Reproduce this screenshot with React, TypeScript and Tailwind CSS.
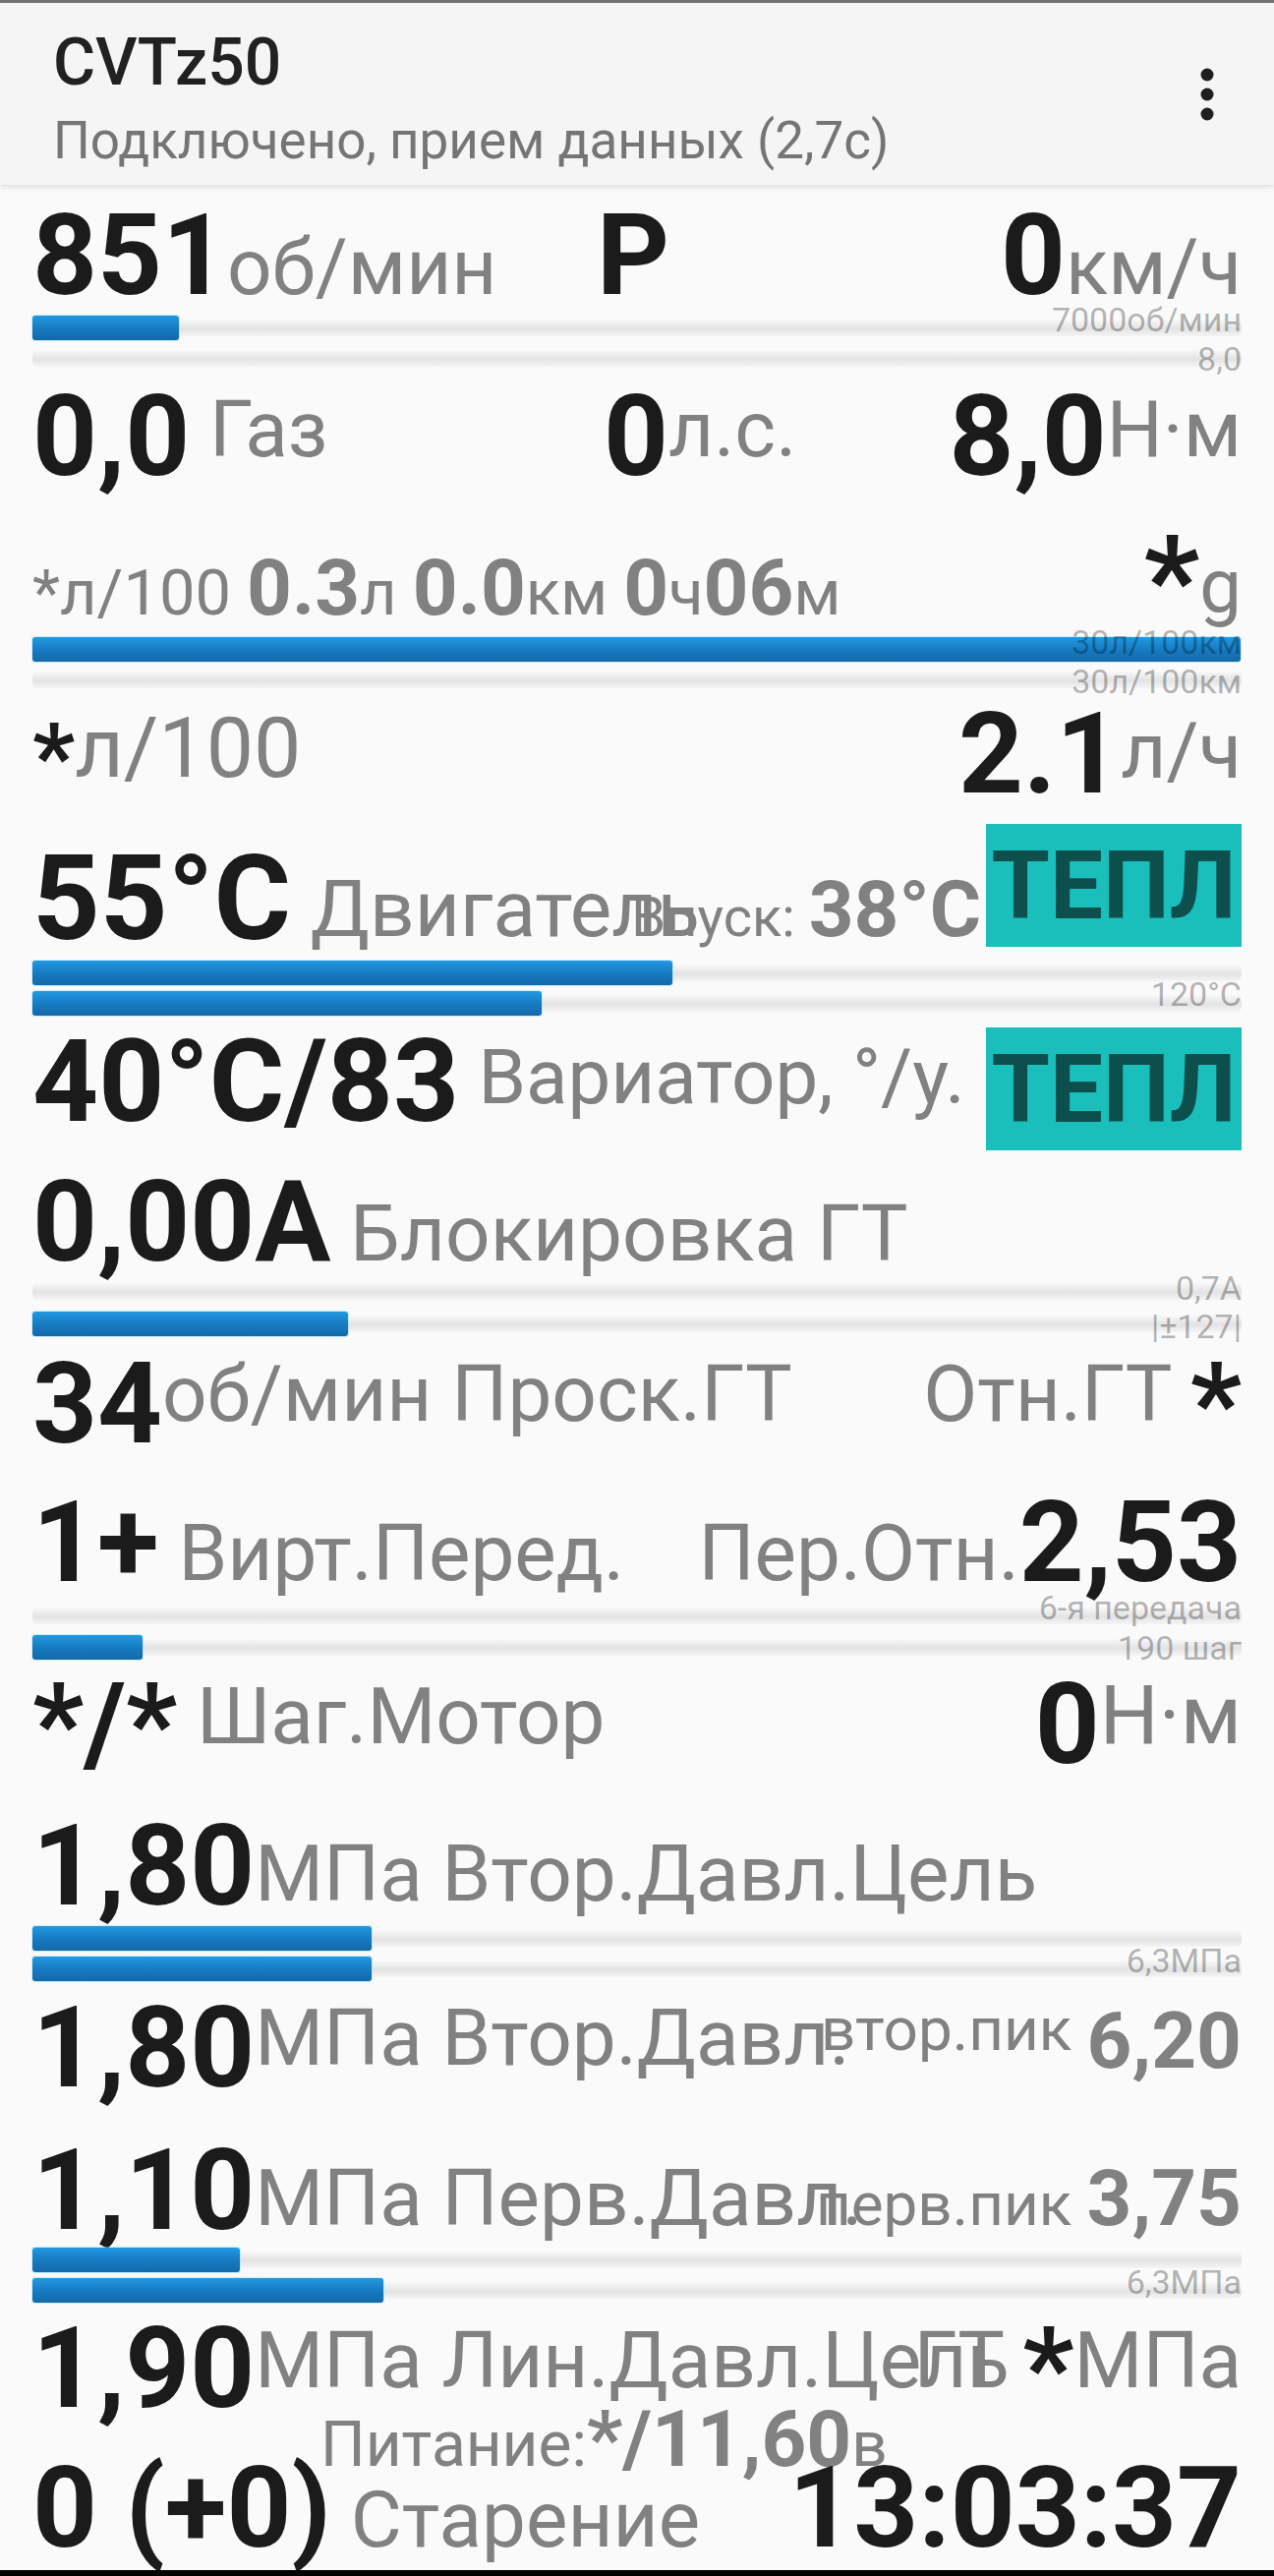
import React from 'react';

const CELL = 'col-start-1 row-start-1 whitespace-nowrap leading-none';
const BIG = 'text-[115px] font-bold text-[#1b1b1b]';
const GRAY = 'text-[#818181] font-normal';
const LABEL = 'absolute right-0 whitespace-nowrap text-[34px] leading-none text-black/30';

function Dots() {
  return (
    <svg width="14" height="54" viewBox="0 0 14 54" className="shrink-0">
      <circle cx="7" cy="7" r="6.5" fill="#1f1f1f" />
      <circle cx="7" cy="27" r="6.5" fill="#1f1f1f" />
      <circle cx="7" cy="47" r="6.5" fill="#1f1f1f" />
    </svg>
  );
}

// track + blue fill, fill is in px of the 1229px track
function Bar({ fill = 0 }: { fill?: number }) {
  return (
    <div className="relative h-[25px] shrink-0">
      <div className="absolute inset-x-0 top-[4px] h-[17px] rounded-[5px] bg-[linear-gradient(to_bottom,#f8f8f8,#e3e3e3_55%,#f5f5f5)]" />
      {fill > 0 && (
        <div
          className="absolute inset-y-0 left-0 rounded-[3px] bg-[linear-gradient(to_bottom,#2299e2,#1679c0_55%,#1469a9)] shadow-[0_0_0_1px_rgba(140,225,255,0.45)]"
          style={{ width: fill }}
        />
      )}
    </div>
  );
}

function Tepl({ className = '' }: { className?: string }) {
  return (
    <div
      className={`flex h-[125px] w-[260px] shrink-0 items-center justify-center bg-[#1abebb] text-[96px] font-bold leading-none text-[#0c4f4d] ${className}`}
    >
      ТЕПЛ
    </div>
  );
}

export default function App() {
  return (
    <div className="relative flex h-[2620px] w-[1296px] flex-col overflow-hidden bg-[#fafafa] font-['Roboto',sans-serif]">
      {/* Toolbar */}
      <header className="relative z-10 flex h-[188px] shrink-0 items-center justify-between border-t-[3px] border-[#737373] bg-[#f5f5f5] pl-[54px] pr-[61px] shadow-[0_2px_6px_rgba(0,0,0,0.13)]">
        <div className="flex flex-col self-start pt-[28px]">
          <div className="text-[66px] font-medium leading-none text-[#212121]">CVTz50</div>
          <div className="mt-[20px] text-[53px] leading-none text-[#757575]">
            Подключено, прием данных (2,7с)
          </div>
        </div>
        <Dots />
      </header>

      <div className="flex flex-col px-[33px]">
        {/* RPM / selector / speed */}
        <div className="grid h-[128px] shrink-0">
          <div className={`${CELL} mt-[14px] justify-self-start ${BIG}`}>
            851<span className={`text-[80px] ${GRAY}`}>об/мин</span>
          </div>
          <div className={`${CELL} ml-[574px] mt-[14px] justify-self-start ${BIG}`}>P</div>
          <div className={`${CELL} mt-[14px] justify-self-end ${BIG}`}>
            0<span className={`text-[80px] ${GRAY}`}>км/ч</span>
          </div>
        </div>
        <div className="relative flex h-[66px] shrink-0 flex-col gap-[6px] pt-[5px]">
          <Bar fill={149} />
          <Bar />
          <span className={`${LABEL} top-[-8px]`}>7000об/мин</span>
          <span className={`${LABEL} top-[32px]`}>8,0</span>
        </div>

        {/* Throttle / power / torque */}
        <div className="grid h-[146px] shrink-0">
          <div className={`${CELL} mt-[4px] justify-self-start ${BIG}`}>
            0,0<span className={`align-[19px] text-[80px] ${GRAY}`}> Газ</span>
          </div>
          <div className={`${CELL} ml-[581px] mt-[4px] justify-self-start ${BIG}`}>
            0<span className={`align-[19px] text-[80px] ${GRAY}`}>л.с.</span>
          </div>
          <div className={`${CELL} mt-[4px] justify-self-end ${BIG}`}>
            8,0<span className={`align-[19px] text-[80px] ${GRAY}`}>Н·м</span>
          </div>
        </div>

        {/* Trip */}
        <div className="grid h-[115px] shrink-0">
          <div className={`${CELL} mt-[30px] justify-self-start text-[80px] font-bold text-[#818181]`}>
            <span className="text-[65px] font-normal">*л/100 </span>0.3
            <span className="text-[65px] font-normal">л </span>0.0
            <span className="text-[65px] font-normal">км </span>0
            <span className="text-[65px] font-normal">ч</span>06
            <span className="text-[65px] font-normal">м</span>
          </div>
          <div className={`${CELL} mt-[0px] justify-self-end ${BIG}`}>
            <span className="align-[-8px] text-[125px]">*</span>
            <span className={`align-[3px] text-[76px] ${GRAY}`}>g</span>
          </div>
        </div>
        <div className="relative flex h-[66px] shrink-0 flex-col gap-[6px] pt-[5px]">
          <Bar fill={1229} />
          <Bar />
          <span className={`${LABEL} top-[-7px]`}>30л/100км</span>
          <span className={`${LABEL} top-[33px]`}>30л/100км</span>
        </div>

        {/* Consumption */}
        <div className="grid h-[121px] shrink-0">
          <div className={`${CELL} mt-[9px] justify-self-start text-[86px] ${GRAY}`}>
            <span className="align-[-12px] text-[95px] font-bold text-[#1b1b1b]">*</span>л/100
          </div>
          <div className={`${CELL} mt-[0px] justify-self-end ${BIG}`}>
            2.1<span className={`align-[15px] text-[80px] ${GRAY}`}>л/ч</span>
          </div>
        </div>

        {/* Engine temp */}
        <div className="grid h-[142px] shrink-0">
          <div className={`${CELL} mt-[24px] justify-self-start text-[120px] font-bold text-[#1b1b1b]`}>
            55°C<span className={`align-[3px] text-[80px] ${GRAY}`}> Двигатель</span>
          </div>
          <div className={`${CELL} flex items-start justify-self-end`}>
            <div className="mt-[55px] text-[80px] font-bold leading-none text-[#818181]">
              <span className="text-[56px] font-normal">Впуск: </span>38°C
            </div>
            <Tepl className="ml-[5px] mt-[8px]" />
          </div>
        </div>
        <div className="relative flex h-[66px] shrink-0 flex-col gap-[6px] pt-[5px]">
          <Bar fill={651} />
          <Bar fill={518} />
          <span className={`${LABEL} top-[22px]`}>120°C</span>
        </div>

        {/* CVT temp */}
        <div className="grid h-[142px] shrink-0">
          <div className={`${CELL} mt-[4px] justify-self-start text-[117px] font-bold text-[#1b1b1b]`}>
            40°C/83<span className={`align-[18px] text-[78px] ${GRAY}`}> Вариатор, °/у.</span>
          </div>
          <Tepl className={`${CELL} mt-[7px] justify-self-end`} />
        </div>

        {/* Lockup */}
        <div className="grid h-[116px] shrink-0">
          <div className={`${CELL} mt-[5px] justify-self-start ${BIG}`}>
            0,00A<span className={`text-[80px] ${GRAY}`}> Блокировка ГТ</span>
          </div>
        </div>
        <div className="relative flex h-[68px] shrink-0 flex-col gap-[8px] pt-[5px]">
          <Bar />
          <Bar fill={321} />
          <span className={`${LABEL} top-[-3px]`}>0,7А</span>
          <span className={`${LABEL} top-[36px]`}>|±127|</span>
        </div>

        {/* Slip */}
        <div className="grid h-[145px] shrink-0">
          <div className={`${CELL} mt-[6px] justify-self-start ${BIG}`}>
            34<span className={`align-[22px] text-[80px] ${GRAY}`}>об/мин Проск.ГТ</span>
          </div>
          <div className={`${CELL} mt-[6px] justify-self-end ${BIG}`}>
            <span className={`align-[22px] text-[80px] ${GRAY}`}>Отн.ГТ </span>*
          </div>
        </div>

        {/* Virtual gear */}
        <div className="grid h-[117px] shrink-0">
          <div className={`${CELL} mt-[2px] justify-self-start ${BIG}`}>
            1+<span className={`align-[1px] text-[80px] ${GRAY}`}> Вирт.Перед.</span>
          </div>
          <div className={`${CELL} mt-[2px] justify-self-end ${BIG}`}>
            <span className={`align-[1px] text-[80px] ${GRAY}`}>Пер.Отн.</span>2,53
          </div>
        </div>
        <div className="relative flex h-[66px] shrink-0 flex-col gap-[7px] pt-[5px]">
          <Bar />
          <Bar fill={112} />
          <span className={`${LABEL} top-[-8px]`}>6-я передача</span>
          <span className={`${LABEL} top-[33px]`}>190 шаг</span>
        </div>

        {/* Stepper */}
        <div className="grid h-[143px] shrink-0">
          <div className={`${CELL} mt-[4px] justify-self-start ${BIG}`}>
            */*<span className={`align-[20px] text-[80px] ${GRAY}`}> Шаг.Мотор</span>
          </div>
          <div className={`${CELL} mt-[4px] justify-self-end ${BIG}`}>
            0<span className={`align-[20px] text-[84px] ${GRAY}`}>Н·м</span>
          </div>
        </div>

        {/* Secondary target */}
        <div className="grid h-[119px] shrink-0">
          <div className={`${CELL} mt-[5px] justify-self-start ${BIG}`}>
            1,80<span className={`align-[4px] text-[80px] ${GRAY}`}>МПа Втор.Давл.Цель</span>
          </div>
        </div>
        <div className="relative flex h-[66px] shrink-0 flex-col gap-[6px] pt-[5px]">
          <Bar fill={345} />
          <Bar fill={345} />
          <span className={`${LABEL} top-[23px]`}>6,3МПа</span>
        </div>

        {/* Secondary pressure */}
        <div className="grid h-[150px] shrink-0">
          <div className={`${CELL} mt-[5px] justify-self-start ${BIG}`}>
            1,80<span className={`align-[22px] text-[80px] ${GRAY}`}>МПа Втор.Давл.</span>
          </div>
          <div className={`${CELL} mt-[13px] justify-self-end text-[80px] font-bold text-[#818181]`}>
            <span className="align-[18px] text-[62px] font-normal">втор.пик </span>6,20
          </div>
        </div>

        {/* Primary pressure */}
        <div className="grid h-[111px] shrink-0">
          <div className={`${CELL} mt-[0px] justify-self-start ${BIG}`}>
            1,10<span className={`align-[4px] text-[80px] ${GRAY}`}>МПа Перв.Давл.</span>
          </div>
          <div className={`${CELL} mt-[26px] justify-self-end text-[80px] font-bold text-[#818181]`}>
            <span className="text-[62px] font-normal">перв.пик </span>3,75
          </div>
        </div>
        <div className="relative flex h-[66px] shrink-0 flex-col gap-[6px] pt-[5px]">
          <Bar fill={211} />
          <Bar fill={357} />
          <span className={`${LABEL} top-[23px]`}>6,3МПа</span>
        </div>

        {/* Line pressure */}
        <div className="grid h-[93px] shrink-0">
          <div className={`${CELL} mt-[4px] justify-self-start ${BIG}`}>
            1,90<span className={`align-[20px] text-[80px] ${GRAY}`}>МПа Лин.Давл.Цель</span>
          </div>
          <div className={`${CELL} mt-[4px] justify-self-end ${BIG}`}>
            <span className={`align-[20px] text-[80px] ${GRAY}`}>ГТ </span>*
            <span className={`align-[20px] text-[80px] ${GRAY}`}>МПа</span>
          </div>
        </div>

        {/* Supply voltage */}
        <div className="grid h-[53px] shrink-0">
          <div className={`${CELL} ml-[293px] mt-[1px] justify-self-start text-[80px] font-bold text-[#818181]`}>
            <span className="text-[64px] font-normal">Питание:</span>*/11,60
            <span className="text-[64px] font-normal">в</span>
          </div>
        </div>

        {/* Aging / clock */}
        <div className="grid h-[121px] shrink-0">
          <div className={`${CELL} mt-[0px] justify-self-start ${BIG}`}>
            0 (+0)<span className={`text-[80px] ${GRAY}`}> Старение</span>
          </div>
          <div className={`${CELL} mt-[0px] justify-self-end ${BIG}`}>13:03:37</div>
        </div>
      </div>

      <div className="mt-auto h-[6px] shrink-0 bg-black" />
    </div>
  );
}
